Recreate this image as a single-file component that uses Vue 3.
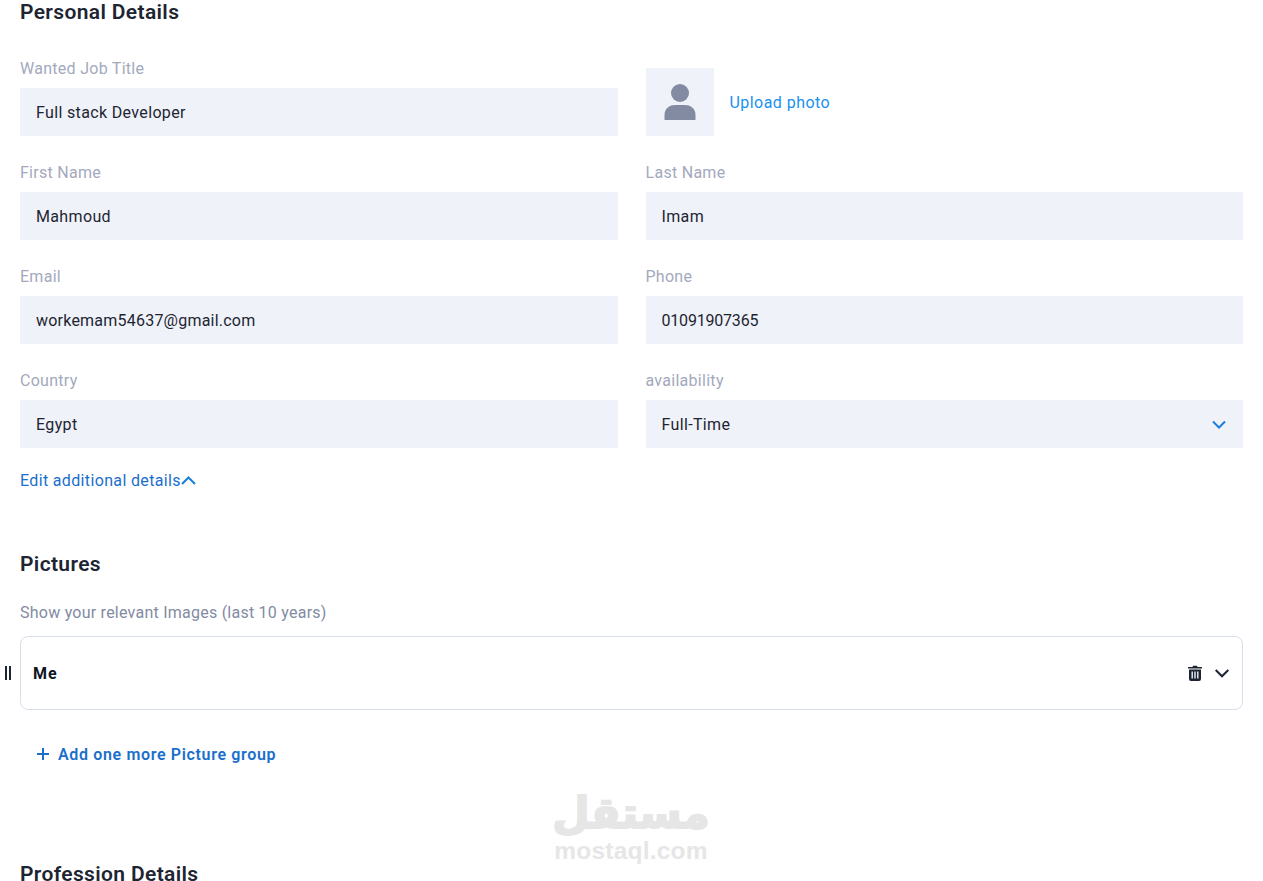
<script setup>
const rows = [
  [{ label: 'First Name', value: 'Mahmoud' }, { label: 'Last Name', value: 'Imam' }],
  [
    { label: 'Email', value: 'workemam54637@gmail.com', tight: 'tight-some' },
    { label: 'Phone', value: '01091907365', tight: 'tight-digits' },
  ],
]
</script>

<template>
  <main class="page">
    <h2 class="heading">Personal Details</h2>
    <section class="grid">
      <div class="field">
        <label>Wanted Job Title</label>
        <div class="input">Full stack Developer</div>
      </div>
      <div class="photo">
        <div class="avatar">
          <svg width="32" height="36" viewBox="0 0 32 36" aria-hidden="true">
            <circle cx="16" cy="9" r="9" fill="#828ba2" />
            <path d="M0.500 36v-5C0.500 24 6 21 11 21h10c5 0 10.500 3 10.500 10v5z" fill="#828ba2" />
          </svg>
        </div>
        <span class="upload">Upload photo</span>
      </div>
      <template v-for="(row, i) in rows" :key="i">
        <div v-for="f in row" :key="f.label" class="field">
          <label>{{ f.label }}</label>
          <div class="input" :class="f.tight">{{ f.value }}</div>
        </div>
      </template>
      <div class="field">
        <label>Country</label>
        <div class="input">Egypt</div>
      </div>
      <div class="field">
        <label>availability</label>
        <div class="input select">
          Full-Time
          <svg width="14" height="9" viewBox="0 0 14 9" aria-hidden="true">
            <path d="M1 1.500l6 6 6-6" fill="none" stroke="#1a7fd8" stroke-width="2" />
          </svg>
        </div>
      </div>
    </section>
    <div class="edit">
      Edit additional details
      <svg width="15" height="9" viewBox="0 0 15 9" aria-hidden="true">
        <path d="M1 8l6.500-6.500L14 8" fill="none" stroke="#1a7fd8" stroke-width="2" />
      </svg>
    </div>

    <h2 class="heading pictures">Pictures</h2>
    <p class="hint">Show your relevant Images (last 10 years)</p>
    <div class="card-wrap">
      <span class="handle"></span>
      <div class="card">
        <strong>Me</strong>
        <div class="card-icons">
          <svg width="14" height="16" viewBox="0 0 14 16" aria-hidden="true">
            <path fill="#1e2532" d="M0 2h4.500l.5-1.200h4L9.500 2H14v1.600H0zM1 4.500h12V14a2 2 0 0 1-2 2H3a2 2 0 0 1-2-2z" />
            <path fill="#eff2f9" d="M3.500 6.500h1.400v7H3.500zM6.300 6.500h1.400v7H6.300zM9.100 6.500h1.400v7H9.100z" />
          </svg>
          <svg width="14" height="9" viewBox="0 0 14 9" aria-hidden="true">
            <path d="M0.700 1l6.300 6.300L13.300 1" fill="none" stroke="#1e2532" stroke-width="2" />
          </svg>
        </div>
      </div>
    </div>
    <div class="add">
      <svg width="14" height="14" viewBox="0 0 14 14" aria-hidden="true">
        <path d="M7 1v12M1 7h12" fill="none" stroke="#1a6fcc" stroke-width="2" />
      </svg>
      <span>Add one more Picture group</span>
    </div>

    <h2 class="heading profession">Profession Details</h2>

    <div class="watermark">
      <span class="wm-ar" dir="rtl" lang="ar">مستقل</span>
      <span class="wm-en">mostaql.com</span>
    </div>
  </main>
</template>

<style>
html, body { margin: 0; background: #fff; overflow: hidden; }
</style>

<style scoped>
.page {
  position: relative;
  height: 881px;
  box-sizing: border-box;
  padding: 0 20px;
  overflow: hidden;
  font-family: Roboto, "Liberation Sans", sans-serif;
  font-size: 16px;
  line-height: 24px;
  letter-spacing: 0.35px;
  color: #1e2532;
}
.heading {
  margin: 0;
  font-size: 21px;
  line-height: 24px;
  font-weight: 600;
  letter-spacing: 0.36px;
}
.grid {
  display: grid;
  grid-template-columns: 1fr 1fr;
  column-gap: 28px;
  row-gap: 24px;
  margin-top: 32px;
}
.field { display: flex; flex-direction: column; gap: 8px; }
.field label {
  display: block;
  height: 24px;
  box-sizing: border-box;
  padding-top: 1px;
  color: #a3a9bd;
  letter-spacing: 0.28px;
}
.input {
  height: 48px;
  box-sizing: border-box;
  padding: 2px 16px 0;
  display: flex;
  align-items: center;
  justify-content: space-between;
  background: #eff2f9;
}
.tight-some { letter-spacing: 0.22px; }
.tight-digits { letter-spacing: -0.2px; }
.select { padding-right: 17px; }
.select svg { margin-top: -2px; }
.photo { display: flex; align-items: center; gap: 16px; align-self: end; }
.avatar {
  width: 68px;
  height: 68px;
  display: flex;
  align-items: center;
  justify-content: center;
  background: #eff2f9;
}
.upload { padding-top: 2px; color: #1a91f0; letter-spacing: 0.45px; }
.edit {
  margin-top: 20px;
  height: 24px;
  box-sizing: border-box;
  padding-top: 1px;
  display: flex;
  align-items: center;
  color: #1a6fcc;
  letter-spacing: 0.35px;
}
.pictures { margin-top: 60px; }
.hint {
  margin: 24px 0 12px;
  height: 24px;
  box-sizing: border-box;
  padding-top: 1px;
  color: #828ba2;
  letter-spacing: 0.24px;
}
.card-wrap { position: relative; }
.handle {
  position: absolute;
  left: -15px;
  top: 30px;
  width: 2px;
  height: 14px;
  border-left: 2px solid #1e2532;
  border-right: 2px solid #1e2532;
}
.card {
  height: 74px;
  box-sizing: border-box;
  padding: 0 13px 0 12px;
  display: flex;
  align-items: center;
  justify-content: space-between;
  border: 1px solid #d9deeb;
  border-radius: 8px;
}
.card strong {
  padding-top: 2px;
  font-weight: 700;
  color: #0f141f;
  letter-spacing: 0.9px;
}
.card-icons { display: flex; align-items: center; gap: 13px; }
.add {
  margin-top: 32px;
  padding-left: 16px;
  height: 24px;
  display: flex;
  align-items: center;
  gap: 8px;
  font-weight: 600;
  color: #1a6fcc;
  letter-spacing: 0.65px;
}
.add span { padding-top: 2px; }
.profession { margin-top: 96px; }
.watermark {
  position: absolute;
  left: 631px;
  top: 787px;
  transform: translateX(-50%);
  display: flex;
  flex-direction: column;
  align-items: center;
  color: #e6e6e6;
  font-weight: 700;
  pointer-events: none;
}
.wm-ar {
  font-family: "DejaVu Sans", sans-serif;
  font-size: 43px;
  line-height: 52px;
  letter-spacing: 0;
  -webkit-text-stroke: 2px #e6e6e6;
}
.wm-en { font-family: "Liberation Sans", sans-serif; font-size: 24.500px; line-height: 24px; letter-spacing: 0.2px; }
</style>
